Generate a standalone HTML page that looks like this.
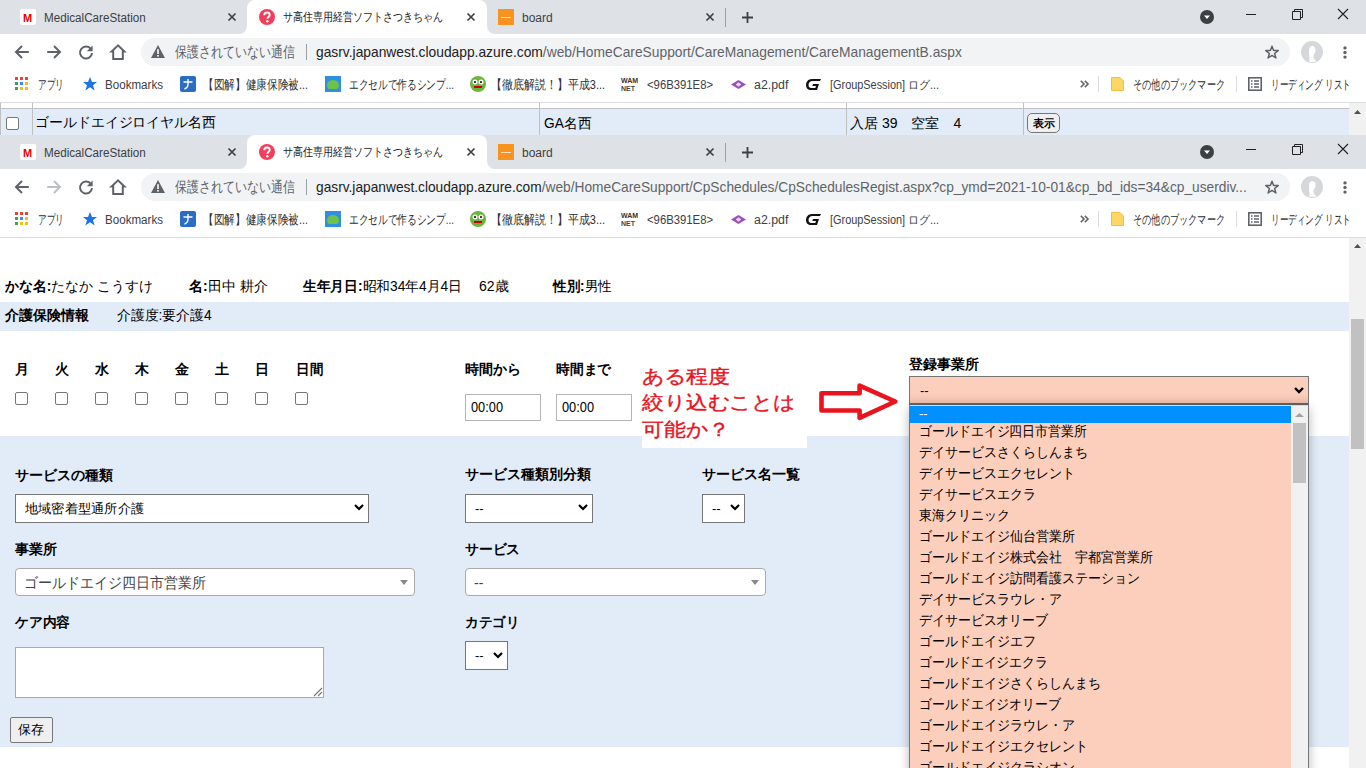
<!DOCTYPE html>
<html><head><meta charset="utf-8">
<style>
*{box-sizing:border-box;margin:0;padding:0}
html,body{width:1366px;height:768px;overflow:hidden;background:#fff;font-family:"Liberation Sans",sans-serif;color:#202124}
.a{position:absolute}
.win{position:absolute;left:0;width:1366px;height:237px}
.t{position:absolute;white-space:nowrap;line-height:1;transform-origin:0 50%}
svg{position:absolute;overflow:visible}
</style></head><body>

<div class="win" style="top:0px">
<div class="a" style="left:0px;top:0px;width:1366px;height:34px;background:#dee1e6;"></div>
<div class="a" style="left:247px;top:0px;width:240px;height:40px;background:#fff;border-radius:8px 8px 0 0"></div>
<div class="a" style="left:239px;top:26px;width:8px;height:8px;background:#fff;"></div>
<div class="a" style="left:231px;top:18px;width:16px;height:16px;background:#dee1e6;border-radius:0 0 8px 0"></div>
<div class="a" style="left:487px;top:26px;width:8px;height:8px;background:#fff;"></div>
<div class="a" style="left:487px;top:18px;width:16px;height:16px;background:#dee1e6;border-radius:0 0 0 8px"></div>
<div class="a" style="left:20px;top:9px;width:16px;height:16px;background:#fff;border-radius:2px"></div>
<div class="t f" style="left:23px;top:13px;font-size:11px;color:#f00000;font-weight:bold;--w:9;transform:scaleX(1.0000);">M</div>
<div class="t f" style="left:44px;top:12px;font-size:12px;color:#3c4043;--w:102;transform:scaleX(0.9714);">MedicalCareStation</div>
<svg style="left:228px;top:13px" width="8" height="8" viewBox="0 0 8 8"><path d="M0.5 0.5L7.5 7.5M7.5 0.5L0.5 7.5" stroke="#3c4043" stroke-width="1.7"/></svg>
<svg style="left:259px;top:9px" width="16" height="16" viewBox="0 0 16 16"><circle cx="8" cy="8" r="8" fill="#f23d5b"/><path d="M5.3 6.2C5.3 4.5 6.4 3.5 8 3.5C9.6 3.5 10.7 4.5 10.7 5.9C10.7 7.6 8.4 7.8 8.4 9.8" stroke="#fff" stroke-width="2" fill="none"/><circle cx="8.3" cy="12.3" r="1.2" fill="#fff"/></svg>
<div class="t f" style="left:283px;top:11px;font-size:12px;color:#202124;--w:160;transform:scaleX(0.8333);">サ高住専用経営ソフトさつきちゃん</div>
<svg style="left:467px;top:13px" width="8" height="8" viewBox="0 0 8 8"><path d="M0.5 0.5L7.5 7.5M7.5 0.5L0.5 7.5" stroke="#3c4043" stroke-width="1.7"/></svg>
<div class="a" style="left:498px;top:9px;width:16px;height:16px;background:#f7931e;"></div>
<div class="a" style="left:501px;top:17px;width:10px;height:1px;background:#fff;opacity:.7"></div>
<div class="t f" style="left:522px;top:12px;font-size:12px;color:#3c4043;--w:31;transform:scaleX(1.0000);">board</div>
<svg style="left:706px;top:13px" width="8" height="8" viewBox="0 0 8 8"><path d="M0.5 0.5L7.5 7.5M7.5 0.5L0.5 7.5" stroke="#3c4043" stroke-width="1.7"/></svg>
<div class="a" style="left:725px;top:8px;width:1px;height:19px;background:#9aa0a6;"></div>
<svg style="left:742px;top:12px" width="11" height="11" viewBox="0 0 11 11"><path d="M5.5 0V11M0 5.5H11" stroke="#3c4043" stroke-width="1.8"/></svg>
<svg style="left:1200px;top:10px" width="14" height="14" viewBox="0 0 14 14"><circle cx="7" cy="7" r="7" fill="#3c4043"/><path d="M4 5.5H10L7 9Z" fill="#fff"/></svg>
<div class="a" style="left:1246px;top:14px;width:10px;height:1px;background:#202124;"></div>
<svg style="left:1292px;top:9px" width="11" height="11" viewBox="0 0 11 11"><path d="M0.5 2.5H8.5V10.5H0.5Z M2.5 2.5V0.5H10.5V8.5H8.5" stroke="#202124" stroke-width="1" fill="none"/></svg>
<svg style="left:1338px;top:9px" width="10" height="10" viewBox="0 0 10 10"><path d="M0 0L10 10M10 0L0 10" stroke="#202124" stroke-width="1.1"/></svg>
<div class="a" style="left:0px;top:34px;width:1366px;height:36px;background:#fff;"></div>
<svg style="left:14px;top:45px" width="16" height="14" viewBox="0 0 16 14"><path d="M14.8 7H2.5M8 1L2 7L8 13" stroke="#5f6368" stroke-width="2" fill="none"/></svg>
<svg style="left:46px;top:45px" width="16" height="14" viewBox="0 0 16 14"><path d="M1.2 7H13.5M8 1L14 7L8 13" stroke="#5f6368" stroke-width="2" fill="none"/></svg>
<svg style="left:79px;top:45px" width="14" height="14" viewBox="0 0 14 14"><path d="M12 4.2A6 6 0 1 0 13 8" stroke="#5f6368" stroke-width="2" fill="none"/><path d="M13.6 0.4V6.2H7.8Z" fill="#5f6368"/></svg>
<svg style="left:110px;top:44px" width="16" height="15" viewBox="0 0 16 15"><path d="M8 1.4L1.6 7.6H3.2V15H12.8V7.6H14.4Z" stroke="#5f6368" stroke-width="2" fill="none"/></svg>
<div class="a" style="left:141px;top:38px;width:1149px;height:28px;background:#f1f3f4;border-radius:14px"></div>
<svg style="left:151px;top:45px" width="14" height="13" viewBox="0 0 14 13"><path d="M7 0L14 13H0Z" fill="#5f6368"/><rect x="6.2" y="4.2" width="1.6" height="4.8" fill="#fff"/><rect x="6.2" y="10" width="1.6" height="1.6" fill="#fff"/></svg>
<div class="t f" style="left:175px;top:44px;font-size:15px;color:#5f6368;--w:120;transform:scaleX(0.8000);">保護されていない通信</div>
<div class="a" style="left:306px;top:44px;width:1px;height:16px;background:#9aa0a6;"></div>
<div class="t f" style="left:316px;top:44px;font-size:15px;color:#202124;--w:646;transform:scaleX(0.9202);">gasrv.japanwest.cloudapp.azure.com<span style="color:#5f6368">/web/HomeCareSupport/CareManagement/CareManagementB.aspx</span></div>
<svg style="left:1265px;top:45px" width="14" height="14" viewBox="0 0 14 14"><path d="M7 1.2L8.6 5.4L13.2 5.6L9.6 8.5L10.9 13L7 10.4L3.1 13L4.4 8.5L0.8 5.6L5.4 5.4Z" stroke="#5f6368" stroke-width="1.5" fill="none" stroke-linejoin="round"/></svg>
<svg style="left:1301px;top:41px" width="22" height="22" viewBox="0 0 22 22"><circle cx="11" cy="11" r="11" fill="#d5d7da"/><path d="M8.5 21C8.5 15 7.5 10 8.5 7C10 4 14 4.5 14.5 8.5C15 12 12.5 13 12.5 15.5C12.5 17.5 14 19 15.5 20.5Z" fill="#fff"/></svg>
<svg style="left:1343px;top:46px" width="4" height="12" viewBox="0 0 4 12"><circle cx="2" cy="1.9" r="1.7" fill="#5f6368"/><circle cx="2" cy="6.5" r="1.7" fill="#5f6368"/><circle cx="2" cy="11.1" r="1.7" fill="#5f6368"/></svg>
<div class="a" style="left:0px;top:70px;width:1366px;height:32px;background:#fff;"></div>
<svg style="left:15px;top:77px" width="13" height="13" viewBox="0 0 13 13"><rect x="0" y="0" width="3" height="3" fill="#ea4335"/><rect x="5" y="0" width="3" height="3" fill="#ea4335"/><rect x="10" y="0" width="3" height="3" fill="#ea4335"/><rect x="0" y="5" width="3" height="3" fill="#34a853"/><rect x="5" y="5" width="3" height="3" fill="#4285f4"/><rect x="10" y="5" width="3" height="3" fill="#fbbc05"/><rect x="0" y="10" width="3" height="3" fill="#34a853"/><rect x="5" y="10" width="3" height="3" fill="#fbbc05"/><rect x="10" y="10" width="3" height="3" fill="#fbbc05"/></svg>
<div class="t f" style="left:38px;top:78px;font-size:13px;color:#2a2d30;--w:26;transform:scaleX(0.6667);">アプリ</div>
<svg style="left:83px;top:77px" width="14" height="14" viewBox="0 0 14 14"><path d="M7 0L9 5H14L10 8.3L11.6 13.5L7 10.3L2.4 13.5L4 8.3L0 5H5Z" fill="#1a73e8"/></svg>
<div class="t f" style="left:105px;top:79px;font-size:12px;color:#3c4043;--w:58;transform:scaleX(0.9667);">Bookmarks</div>
<div class="a" style="left:180px;top:76px;width:16px;height:16px;background:#2b6cc4;border-radius:2px"></div>
<svg style="left:182px;top:78px" width="12" height="12" viewBox="0 0 12 12"><path d="M1.5 4H10.5M6 1V6C6 8.5 5 10 2.5 11" stroke="#fff" stroke-width="1.4" fill="none"/></svg>
<div class="t f" style="left:203px;top:78px;font-size:13px;color:#2a2d30;--w:105;transform:scaleX(0.8203);">【図解】健康保険被...</div>
<div class="a" style="left:325px;top:76px;width:16px;height:16px;background:#2f8fe0;"></div>
<div class="a" style="left:327px;top:80px;width:12px;height:9px;background:#6cc24a;border-radius:6px 6px 4px 4px"></div>
<div class="t f" style="left:349px;top:78px;font-size:13px;color:#2a2d30;--w:105;transform:scaleX(0.7447);">エクセルで作るシンプ...</div>
<svg style="left:470px;top:76px" width="16" height="16" viewBox="0 0 16 16"><circle cx="8" cy="8" r="8" fill="#6db33f"/><circle cx="5" cy="6" r="2.5" fill="#fff"/><circle cx="11" cy="6" r="2.5" fill="#fff"/><circle cx="5" cy="6" r="1" fill="#000"/><circle cx="11" cy="6" r="1" fill="#000"/><path d="M4 11H12" stroke="#c00" stroke-width="2"/></svg>
<div class="t f" style="left:491px;top:78px;font-size:13px;color:#2a2d30;--w:114;transform:scaleX(0.8444);">【徹底解説！】平成3...</div>
<svg style="left:621px;top:77px" width="17" height="14" viewBox="0 0 17 14"><text x="0" y="6" font-size="7" font-weight="bold" fill="#333" font-family="Liberation Sans">WAM</text><text x="0" y="13.5" font-size="7" font-weight="bold" fill="#444" font-family="Liberation Sans">NET</text></svg>
<div class="t f" style="left:647px;top:79px;font-size:12px;color:#3c4043;--w:66;transform:scaleX(0.9429);">&lt;96B391E8&gt;</div>
<svg style="left:731px;top:80px" width="15" height="9" viewBox="0 0 15 9"><path d="M7.5 0L15 4.5L7.5 9L0 4.5Z" fill="#9b4fb8"/><path d="M7.5 2.3L10.3 4.5L7.5 6.7L4.7 4.5Z" fill="#e9d6f0"/></svg>
<div class="t f" style="left:754px;top:79px;font-size:12px;color:#3c4043;--w:34;transform:scaleX(1.0303);">a2.pdf</div>
<svg style="left:805px;top:77px" width="17" height="14" viewBox="0 0 17 14"><path d="M16 2H7C3 2 1 5 1 8C1 11 3 13 6 13H12L14 7H8L7.3 9H11L10.3 11H6.5C4.5 11 3.5 10 3.5 8C3.5 6 5 4 7.5 4H15Z" fill="#111"/></svg>
<div class="t f" style="left:830px;top:79px;font-size:12px;color:#3c4043;--w:109;transform:scaleX(0.9083);">[GroupSession] ログ...</div>
<svg style="left:1080px;top:80px" width="9" height="8" viewBox="0 0 9 8"><path d="M0.8 0.8L4 4L0.8 7.2M4.8 0.8L8 4L4.8 7.2" stroke="#5f6368" stroke-width="1.6" fill="none"/></svg>
<div class="a" style="left:1098px;top:76px;width:1px;height:16px;background:#dadce0;"></div>
<svg style="left:1111px;top:77px" width="13" height="14" viewBox="0 0 13 14"><path d="M0.5 0.5H9L12.5 4V13.5H0.5Z" fill="#fdd663" stroke="#f2bd42" stroke-width="1"/></svg>
<div class="t f" style="left:1133px;top:78px;font-size:13px;color:#2a2d30;--w:92;transform:scaleX(0.7077);">その他のブックマーク</div>
<div class="a" style="left:1236px;top:76px;width:1px;height:16px;background:#dadce0;"></div>
<svg style="left:1248px;top:77px" width="14" height="14" viewBox="0 0 14 14"><rect x="0.8" y="0.8" width="12.4" height="12.4" stroke="#5f6368" stroke-width="1.6" fill="none"/><path d="M3 4H4.5M6 4H11M3 7H4.5M6 7H11M3 10H4.5M6 10H11" stroke="#5f6368" stroke-width="1.4"/></svg>
<div class="t f" style="left:1271px;top:78px;font-size:13px;color:#2a2d30;--w:80;transform:scaleX(0.6612);">リーディング リスト</div>
<div class="a" style="left:0px;top:102px;width:1366px;height:1px;background:#dadce0;"></div>
</div>
<div class="a" style="left:0px;top:103px;width:1349px;height:32px;background:#fff;"></div>
<div class="a" style="left:0px;top:108px;width:1349px;height:1px;background:#c0c0c0;"></div>
<div class="a" style="left:1px;top:109px;width:1348px;height:26px;background:#e2ebf8;"></div>
<div class="a" style="left:0px;top:103px;width:1px;height:32px;background:#c0c0c0;"></div>
<div class="a" style="left:32px;top:103px;width:1px;height:32px;background:#c0c0c0;"></div>
<div class="a" style="left:539px;top:103px;width:1px;height:32px;background:#c0c0c0;"></div>
<div class="a" style="left:846px;top:103px;width:1px;height:32px;background:#c0c0c0;"></div>
<div class="a" style="left:1023px;top:103px;width:1px;height:32px;background:#c0c0c0;"></div>
<div class="a" style="left:6px;top:117px;width:13px;height:13px;background:#fff;border:1px solid #767676;border-radius:2px"></div>
<div class="t f" style="left:35px;top:115px;font-size:14px;color:#000;--w:181;transform:scaleX(0.9945);">ゴールドエイジロイヤル名西</div>
<div class="t f" style="left:544px;top:116px;font-size:14px;color:#000;--w:47;transform:scaleX(0.9792);">GA名西</div>
<div class="t f" style="left:850px;top:116px;font-size:14px;color:#000;--w:111;transform:scaleX(1.0000);font-family:"Liberation Mono",monospace;">入居 39　空室　4</div>
<div class="a" style="left:1027px;top:113px;width:33px;height:20px;background:#efefef;border:1px solid #767676;border-radius:5px"></div>
<div class="t f" style="left:1033px;top:118px;font-size:11px;color:#000;font-weight:bold;--w:22;transform:scaleX(1.0000);">表示</div>
<div class="a" style="left:1349px;top:103px;width:17px;height:32px;background:#f1f1f1;"></div>
<svg style="left:1354px;top:110px" width="7" height="4" viewBox="0 0 7 4"><path d="M3.5 0L7 4H0Z" fill="#505050"/></svg>
<div class="win" style="top:135px">
<div class="a" style="left:0px;top:0px;width:1366px;height:34px;background:#dee1e6;"></div>
<div class="a" style="left:247px;top:0px;width:240px;height:40px;background:#fff;border-radius:8px 8px 0 0"></div>
<div class="a" style="left:239px;top:26px;width:8px;height:8px;background:#fff;"></div>
<div class="a" style="left:231px;top:18px;width:16px;height:16px;background:#dee1e6;border-radius:0 0 8px 0"></div>
<div class="a" style="left:487px;top:26px;width:8px;height:8px;background:#fff;"></div>
<div class="a" style="left:487px;top:18px;width:16px;height:16px;background:#dee1e6;border-radius:0 0 0 8px"></div>
<div class="a" style="left:20px;top:9px;width:16px;height:16px;background:#fff;border-radius:2px"></div>
<div class="t f" style="left:23px;top:13px;font-size:11px;color:#f00000;font-weight:bold;--w:9;transform:scaleX(1.0000);">M</div>
<div class="t f" style="left:44px;top:12px;font-size:12px;color:#3c4043;--w:102;transform:scaleX(0.9714);">MedicalCareStation</div>
<svg style="left:228px;top:13px" width="8" height="8" viewBox="0 0 8 8"><path d="M0.5 0.5L7.5 7.5M7.5 0.5L0.5 7.5" stroke="#3c4043" stroke-width="1.7"/></svg>
<svg style="left:259px;top:9px" width="16" height="16" viewBox="0 0 16 16"><circle cx="8" cy="8" r="8" fill="#f23d5b"/><path d="M5.3 6.2C5.3 4.5 6.4 3.5 8 3.5C9.6 3.5 10.7 4.5 10.7 5.9C10.7 7.6 8.4 7.8 8.4 9.8" stroke="#fff" stroke-width="2" fill="none"/><circle cx="8.3" cy="12.3" r="1.2" fill="#fff"/></svg>
<div class="t f" style="left:283px;top:11px;font-size:12px;color:#202124;--w:160;transform:scaleX(0.8333);">サ高住専用経営ソフトさつきちゃん</div>
<svg style="left:467px;top:13px" width="8" height="8" viewBox="0 0 8 8"><path d="M0.5 0.5L7.5 7.5M7.5 0.5L0.5 7.5" stroke="#3c4043" stroke-width="1.7"/></svg>
<div class="a" style="left:498px;top:9px;width:16px;height:16px;background:#f7931e;"></div>
<div class="a" style="left:501px;top:17px;width:10px;height:1px;background:#fff;opacity:.7"></div>
<div class="t f" style="left:522px;top:12px;font-size:12px;color:#3c4043;--w:31;transform:scaleX(1.0000);">board</div>
<svg style="left:706px;top:13px" width="8" height="8" viewBox="0 0 8 8"><path d="M0.5 0.5L7.5 7.5M7.5 0.5L0.5 7.5" stroke="#3c4043" stroke-width="1.7"/></svg>
<div class="a" style="left:725px;top:8px;width:1px;height:19px;background:#9aa0a6;"></div>
<svg style="left:742px;top:12px" width="11" height="11" viewBox="0 0 11 11"><path d="M5.5 0V11M0 5.5H11" stroke="#3c4043" stroke-width="1.8"/></svg>
<svg style="left:1200px;top:10px" width="14" height="14" viewBox="0 0 14 14"><circle cx="7" cy="7" r="7" fill="#3c4043"/><path d="M4 5.5H10L7 9Z" fill="#fff"/></svg>
<div class="a" style="left:1246px;top:14px;width:10px;height:1px;background:#202124;"></div>
<svg style="left:1292px;top:9px" width="11" height="11" viewBox="0 0 11 11"><path d="M0.5 2.5H8.5V10.5H0.5Z M2.5 2.5V0.5H10.5V8.5H8.5" stroke="#202124" stroke-width="1" fill="none"/></svg>
<svg style="left:1338px;top:9px" width="10" height="10" viewBox="0 0 10 10"><path d="M0 0L10 10M10 0L0 10" stroke="#202124" stroke-width="1.1"/></svg>
<div class="a" style="left:0px;top:34px;width:1366px;height:36px;background:#fff;"></div>
<svg style="left:14px;top:45px" width="16" height="14" viewBox="0 0 16 14"><path d="M14.8 7H2.5M8 1L2 7L8 13" stroke="#5f6368" stroke-width="2" fill="none"/></svg>
<svg style="left:46px;top:45px" width="16" height="14" viewBox="0 0 16 14"><path d="M1.2 7H13.5M8 1L14 7L8 13" stroke="#bdc1c6" stroke-width="2" fill="none"/></svg>
<svg style="left:79px;top:45px" width="14" height="14" viewBox="0 0 14 14"><path d="M12 4.2A6 6 0 1 0 13 8" stroke="#5f6368" stroke-width="2" fill="none"/><path d="M13.6 0.4V6.2H7.8Z" fill="#5f6368"/></svg>
<svg style="left:110px;top:44px" width="16" height="15" viewBox="0 0 16 15"><path d="M8 1.4L1.6 7.6H3.2V15H12.8V7.6H14.4Z" stroke="#5f6368" stroke-width="2" fill="none"/></svg>
<div class="a" style="left:141px;top:38px;width:1149px;height:28px;background:#f1f3f4;border-radius:14px"></div>
<svg style="left:151px;top:45px" width="14" height="13" viewBox="0 0 14 13"><path d="M7 0L14 13H0Z" fill="#5f6368"/><rect x="6.2" y="4.2" width="1.6" height="4.8" fill="#fff"/><rect x="6.2" y="10" width="1.6" height="1.6" fill="#fff"/></svg>
<div class="t f" style="left:175px;top:44px;font-size:15px;color:#5f6368;--w:120;transform:scaleX(0.8000);">保護されていない通信</div>
<div class="a" style="left:306px;top:44px;width:1px;height:16px;background:#9aa0a6;"></div>
<div class="t f" style="left:316px;top:44px;font-size:15px;color:#202124;--w:931;transform:scaleX(0.9154);">gasrv.japanwest.cloudapp.azure.com<span style="color:#5f6368">/web/HomeCareSupport/CpSchedules/CpSchedulesRegist.aspx?cp_ymd=2021-10-01&amp;cp_bd_ids=34&amp;cp_userdiv...</span></div>
<svg style="left:1265px;top:45px" width="14" height="14" viewBox="0 0 14 14"><path d="M7 1.2L8.6 5.4L13.2 5.6L9.6 8.5L10.9 13L7 10.4L3.1 13L4.4 8.5L0.8 5.6L5.4 5.4Z" stroke="#5f6368" stroke-width="1.5" fill="none" stroke-linejoin="round"/></svg>
<svg style="left:1301px;top:41px" width="22" height="22" viewBox="0 0 22 22"><circle cx="11" cy="11" r="11" fill="#d5d7da"/><path d="M8.5 21C8.5 15 7.5 10 8.5 7C10 4 14 4.5 14.5 8.5C15 12 12.5 13 12.5 15.5C12.5 17.5 14 19 15.5 20.5Z" fill="#fff"/></svg>
<svg style="left:1343px;top:46px" width="4" height="12" viewBox="0 0 4 12"><circle cx="2" cy="1.9" r="1.7" fill="#5f6368"/><circle cx="2" cy="6.5" r="1.7" fill="#5f6368"/><circle cx="2" cy="11.1" r="1.7" fill="#5f6368"/></svg>
<div class="a" style="left:0px;top:70px;width:1366px;height:32px;background:#fff;"></div>
<svg style="left:15px;top:77px" width="13" height="13" viewBox="0 0 13 13"><rect x="0" y="0" width="3" height="3" fill="#ea4335"/><rect x="5" y="0" width="3" height="3" fill="#ea4335"/><rect x="10" y="0" width="3" height="3" fill="#ea4335"/><rect x="0" y="5" width="3" height="3" fill="#34a853"/><rect x="5" y="5" width="3" height="3" fill="#4285f4"/><rect x="10" y="5" width="3" height="3" fill="#fbbc05"/><rect x="0" y="10" width="3" height="3" fill="#34a853"/><rect x="5" y="10" width="3" height="3" fill="#fbbc05"/><rect x="10" y="10" width="3" height="3" fill="#fbbc05"/></svg>
<div class="t f" style="left:38px;top:78px;font-size:13px;color:#2a2d30;--w:26;transform:scaleX(0.6667);">アプリ</div>
<svg style="left:83px;top:77px" width="14" height="14" viewBox="0 0 14 14"><path d="M7 0L9 5H14L10 8.3L11.6 13.5L7 10.3L2.4 13.5L4 8.3L0 5H5Z" fill="#1a73e8"/></svg>
<div class="t f" style="left:105px;top:79px;font-size:12px;color:#3c4043;--w:58;transform:scaleX(0.9667);">Bookmarks</div>
<div class="a" style="left:180px;top:76px;width:16px;height:16px;background:#2b6cc4;border-radius:2px"></div>
<svg style="left:182px;top:78px" width="12" height="12" viewBox="0 0 12 12"><path d="M1.5 4H10.5M6 1V6C6 8.5 5 10 2.5 11" stroke="#fff" stroke-width="1.4" fill="none"/></svg>
<div class="t f" style="left:203px;top:78px;font-size:13px;color:#2a2d30;--w:105;transform:scaleX(0.8203);">【図解】健康保険被...</div>
<div class="a" style="left:325px;top:76px;width:16px;height:16px;background:#2f8fe0;"></div>
<div class="a" style="left:327px;top:80px;width:12px;height:9px;background:#6cc24a;border-radius:6px 6px 4px 4px"></div>
<div class="t f" style="left:349px;top:78px;font-size:13px;color:#2a2d30;--w:105;transform:scaleX(0.7447);">エクセルで作るシンプ...</div>
<svg style="left:470px;top:76px" width="16" height="16" viewBox="0 0 16 16"><circle cx="8" cy="8" r="8" fill="#6db33f"/><circle cx="5" cy="6" r="2.5" fill="#fff"/><circle cx="11" cy="6" r="2.5" fill="#fff"/><circle cx="5" cy="6" r="1" fill="#000"/><circle cx="11" cy="6" r="1" fill="#000"/><path d="M4 11H12" stroke="#c00" stroke-width="2"/></svg>
<div class="t f" style="left:491px;top:78px;font-size:13px;color:#2a2d30;--w:114;transform:scaleX(0.8444);">【徹底解説！】平成3...</div>
<svg style="left:621px;top:77px" width="17" height="14" viewBox="0 0 17 14"><text x="0" y="6" font-size="7" font-weight="bold" fill="#333" font-family="Liberation Sans">WAM</text><text x="0" y="13.5" font-size="7" font-weight="bold" fill="#444" font-family="Liberation Sans">NET</text></svg>
<div class="t f" style="left:647px;top:79px;font-size:12px;color:#3c4043;--w:66;transform:scaleX(0.9429);">&lt;96B391E8&gt;</div>
<svg style="left:731px;top:80px" width="15" height="9" viewBox="0 0 15 9"><path d="M7.5 0L15 4.5L7.5 9L0 4.5Z" fill="#9b4fb8"/><path d="M7.5 2.3L10.3 4.5L7.5 6.7L4.7 4.5Z" fill="#e9d6f0"/></svg>
<div class="t f" style="left:754px;top:79px;font-size:12px;color:#3c4043;--w:34;transform:scaleX(1.0303);">a2.pdf</div>
<svg style="left:805px;top:77px" width="17" height="14" viewBox="0 0 17 14"><path d="M16 2H7C3 2 1 5 1 8C1 11 3 13 6 13H12L14 7H8L7.3 9H11L10.3 11H6.5C4.5 11 3.5 10 3.5 8C3.5 6 5 4 7.5 4H15Z" fill="#111"/></svg>
<div class="t f" style="left:830px;top:79px;font-size:12px;color:#3c4043;--w:109;transform:scaleX(0.9083);">[GroupSession] ログ...</div>
<svg style="left:1080px;top:80px" width="9" height="8" viewBox="0 0 9 8"><path d="M0.8 0.8L4 4L0.8 7.2M4.8 0.8L8 4L4.8 7.2" stroke="#5f6368" stroke-width="1.6" fill="none"/></svg>
<div class="a" style="left:1098px;top:76px;width:1px;height:16px;background:#dadce0;"></div>
<svg style="left:1111px;top:77px" width="13" height="14" viewBox="0 0 13 14"><path d="M0.5 0.5H9L12.5 4V13.5H0.5Z" fill="#fdd663" stroke="#f2bd42" stroke-width="1"/></svg>
<div class="t f" style="left:1133px;top:78px;font-size:13px;color:#2a2d30;--w:92;transform:scaleX(0.7077);">その他のブックマーク</div>
<div class="a" style="left:1236px;top:76px;width:1px;height:16px;background:#dadce0;"></div>
<svg style="left:1248px;top:77px" width="14" height="14" viewBox="0 0 14 14"><rect x="0.8" y="0.8" width="12.4" height="12.4" stroke="#5f6368" stroke-width="1.6" fill="none"/><path d="M3 4H4.5M6 4H11M3 7H4.5M6 7H11M3 10H4.5M6 10H11" stroke="#5f6368" stroke-width="1.4"/></svg>
<div class="t f" style="left:1271px;top:78px;font-size:13px;color:#2a2d30;--w:80;transform:scaleX(0.6612);">リーディング リスト</div>
<div class="a" style="left:0px;top:102px;width:1366px;height:1px;background:#dadce0;"></div>
</div>
<div class="a" style="left:0px;top:238px;width:1349px;height:530px;background:#fff;"></div>
<div class="t f" style="left:5px;top:279px;font-size:14px;color:#000;--w:148;transform:scaleX(0.9933);"><b>かな名:</b>たなか こうすけ</div>
<div class="t f" style="left:189px;top:279px;font-size:14px;color:#000;--w:79;transform:scaleX(1.0000);"><b>名:</b>田中 耕介</div>
<div class="t f" style="left:303px;top:279px;font-size:14px;color:#000;--w:159;transform:scaleX(0.9815);"><b>生年月日:</b>昭和34年4月4日</div>
<div class="t f" style="left:479px;top:279px;font-size:14px;color:#000;--w:30;transform:scaleX(1.0000);">62歳</div>
<div class="t f" style="left:553px;top:279px;font-size:14px;color:#000;--w:59;transform:scaleX(0.9672);"><b>性別:</b>男性</div>
<div class="a" style="left:0px;top:302px;width:1349px;height:29px;background:#e2ebf8;"></div>
<div class="t f" style="left:5px;top:308px;font-size:14px;color:#000;font-weight:bold;--w:84;transform:scaleX(1.0000);">介護保険情報</div>
<div class="t f" style="left:117px;top:308px;font-size:14px;color:#000;--w:95;transform:scaleX(0.9896);">介護度:要介護4</div>
<div class="t" style="left:15px;top:362px;font-size:14px;color:#000;font-weight:bold;">月</div>
<div class="a" style="left:15px;top:392px;width:13px;height:13px;background:#fff;border:1px solid #767676;border-radius:2px"></div>
<div class="t" style="left:55px;top:362px;font-size:14px;color:#000;font-weight:bold;">火</div>
<div class="a" style="left:55px;top:392px;width:13px;height:13px;background:#fff;border:1px solid #767676;border-radius:2px"></div>
<div class="t" style="left:95px;top:362px;font-size:14px;color:#000;font-weight:bold;">水</div>
<div class="a" style="left:95px;top:392px;width:13px;height:13px;background:#fff;border:1px solid #767676;border-radius:2px"></div>
<div class="t" style="left:135px;top:362px;font-size:14px;color:#000;font-weight:bold;">木</div>
<div class="a" style="left:135px;top:392px;width:13px;height:13px;background:#fff;border:1px solid #767676;border-radius:2px"></div>
<div class="t" style="left:175px;top:362px;font-size:14px;color:#000;font-weight:bold;">金</div>
<div class="a" style="left:175px;top:392px;width:13px;height:13px;background:#fff;border:1px solid #767676;border-radius:2px"></div>
<div class="t" style="left:215px;top:362px;font-size:14px;color:#000;font-weight:bold;">土</div>
<div class="a" style="left:215px;top:392px;width:13px;height:13px;background:#fff;border:1px solid #767676;border-radius:2px"></div>
<div class="t" style="left:255px;top:362px;font-size:14px;color:#000;font-weight:bold;">日</div>
<div class="a" style="left:255px;top:392px;width:13px;height:13px;background:#fff;border:1px solid #767676;border-radius:2px"></div>
<div class="t f" style="left:296px;top:362px;font-size:14px;color:#000;font-weight:bold;--w:27;transform:scaleX(0.9643);">日間</div>
<div class="a" style="left:295px;top:392px;width:13px;height:13px;background:#fff;border:1px solid #767676;border-radius:2px"></div>
<div class="t f" style="left:465px;top:362px;font-size:14px;color:#000;font-weight:bold;--w:56;transform:scaleX(1.0000);">時間から</div>
<div class="t f" style="left:556px;top:362px;font-size:14px;color:#000;font-weight:bold;--w:55;transform:scaleX(0.9821);">時間まで</div>
<div class="a" style="left:465px;top:394px;width:76px;height:27px;background:#fff;border:1px solid #b5b5b5"></div>
<div class="a" style="left:556px;top:394px;width:76px;height:27px;background:#fff;border:1px solid #b5b5b5"></div>
<div class="t f" style="left:471px;top:400px;font-size:14px;color:#000;--w:32;transform:scaleX(0.9143);">00:00</div>
<div class="t f" style="left:562px;top:400px;font-size:14px;color:#000;--w:32;transform:scaleX(0.9143);">00:00</div>
<div class="a" style="left:0px;top:436px;width:1349px;height:311px;background:#e2ebf8;"></div>
<div class="a" style="left:642px;top:358px;width:165px;height:90px;background:#fff;"></div>
<div class="t f" style="left:642px;top:367px;font-size:19px;color:#e8141e;--w:88;transform:scaleX(1.1579);-webkit-text-stroke:0.35px #e8141e;">ある程度</div>
<div class="t f" style="left:642px;top:393px;font-size:19px;color:#e8141e;--w:153;transform:scaleX(1.1504);-webkit-text-stroke:0.35px #e8141e;">絞り込むことは</div>
<div class="t f" style="left:642px;top:420px;font-size:19px;color:#e8141e;--w:88;transform:scaleX(1.1579);-webkit-text-stroke:0.35px #e8141e;">可能か？</div>
<svg style="left:819px;top:383px" width="80" height="38" viewBox="0 0 80 38"><path d="M2.5 10.3H40.6V2.6L76.3 18.5L40.6 34.8V27.5H2.5Z" fill="#fff" stroke="#e8141e" stroke-width="4.6" stroke-linejoin="round"/></svg>
<div class="t f" style="left:15px;top:468px;font-size:14px;color:#000;font-weight:bold;--w:98;transform:scaleX(1.0000);">サービスの種類</div>
<div class="a" style="left:15px;top:494px;width:354px;height:29px;background:#fff;border:1px solid #767676;border-radius:0"></div>
<div class="t f" style="left:25px;top:502px;font-size:13px;color:#000;--w:119;transform:scaleX(1.0171);">地域密着型通所介護</div>
<svg style="left:354px;top:504px" width="10" height="6" viewBox="0 0 10 6"><path d="M1 1L5 5L9 1" stroke="#000" stroke-width="2.2" fill="none"/></svg>
<div class="t f" style="left:465px;top:467px;font-size:14px;color:#000;font-weight:bold;--w:126;transform:scaleX(1.0000);">サービス種類別分類</div>
<div class="a" style="left:465px;top:494px;width:128px;height:29px;background:#fff;border:1px solid #767676"></div>
<div class="t" style="left:475px;top:502px;font-size:13px;color:#000;">--</div>
<svg style="left:578px;top:504px" width="10" height="6" viewBox="0 0 10 6"><path d="M1 1L5 5L9 1" stroke="#000" stroke-width="2.2" fill="none"/></svg>
<div class="t f" style="left:702px;top:467px;font-size:14px;color:#000;font-weight:bold;--w:98;transform:scaleX(1.0000);">サービス名一覧</div>
<div class="a" style="left:702px;top:494px;width:43px;height:29px;background:#fff;border:1px solid #767676"></div>
<div class="t" style="left:712px;top:502px;font-size:13px;color:#000;">--</div>
<svg style="left:730px;top:504px" width="10" height="6" viewBox="0 0 10 6"><path d="M1 1L5 5L9 1" stroke="#000" stroke-width="2.2" fill="none"/></svg>
<div class="t f" style="left:15px;top:542px;font-size:14px;color:#000;font-weight:bold;--w:42;transform:scaleX(1.0000);">事業所</div>
<div class="a" style="left:15px;top:568px;width:400px;height:28px;background:#fff;border:1px solid #aaa;border-radius:4px"></div>
<div class="t f" style="left:24px;top:575px;font-size:15px;color:#444;--w:182;transform:scaleX(0.9333);">ゴールドエイジ四日市営業所</div>
<svg style="left:400px;top:580px" width="8" height="5" viewBox="0 0 8 5"><path d="M0 0H8L4 5Z" fill="#888"/></svg>
<div class="t f" style="left:465px;top:542px;font-size:14px;color:#000;font-weight:bold;--w:55;transform:scaleX(0.9821);">サービス</div>
<div class="a" style="left:465px;top:568px;width:301px;height:28px;background:#fff;border:1px solid #aaa;border-radius:4px"></div>
<div class="t" style="left:474px;top:576px;font-size:14px;color:#444;">--</div>
<svg style="left:751px;top:580px" width="8" height="5" viewBox="0 0 8 5"><path d="M0 0H8L4 5Z" fill="#888"/></svg>
<div class="t f" style="left:15px;top:615px;font-size:14px;color:#000;font-weight:bold;--w:55;transform:scaleX(0.9821);">ケア内容</div>
<div class="a" style="left:465px;top:615px;width:0px;height:0px;background:#000;"></div>
<div class="t f" style="left:465px;top:615px;font-size:14px;color:#000;font-weight:bold;--w:54;transform:scaleX(0.9643);">カテゴリ</div>
<div class="a" style="left:465px;top:641px;width:43px;height:29px;background:#fff;border:1px solid #767676"></div>
<div class="t" style="left:475px;top:649px;font-size:13px;color:#000;">--</div>
<svg style="left:493px;top:652px" width="10" height="6" viewBox="0 0 10 6"><path d="M1 1L5 5L9 1" stroke="#000" stroke-width="2.2" fill="none"/></svg>
<div class="a" style="left:15px;top:647px;width:309px;height:51px;background:#fff;border:1px solid #a9a9a9"></div>
<svg style="left:313px;top:687px" width="10" height="10" viewBox="0 0 10 10"><path d="M9 1L1 9M9 5L5 9" stroke="#777" stroke-width="1.1"/></svg>
<div class="a" style="left:10px;top:717px;width:43px;height:26px;background:#efefef;border:1px solid #767676;border-radius:2px"></div>
<div class="t f" style="left:18px;top:723px;font-size:13px;color:#000;--w:26;transform:scaleX(1.0000);">保存</div>
<div class="t f" style="left:909px;top:357px;font-size:14px;color:#000;font-weight:bold;--w:70;transform:scaleX(1.0000);">登録事業所</div>
<div class="a" style="left:909px;top:376px;width:400px;height:29px;background:linear-gradient(#fccebc 0%,#fccebc 62%,#eec0ad 100%);border:1px solid #767676;border-bottom:2px solid #666"></div>
<div class="t" style="left:920px;top:384px;font-size:13px;color:#000;">--</div>
<svg style="left:1294px;top:387px" width="10" height="6" viewBox="0 0 10 6"><path d="M1 1L5 5L9 1" stroke="#000" stroke-width="2.4" fill="none"/></svg>
<div class="a" style="left:909px;top:405px;width:400px;height:380px;background:#fccebc;border-left:1px solid #767676;border-right:1px solid #767676;box-shadow:0 3px 10px rgba(0,0,0,.28)"></div>
<div class="a" style="left:910px;top:406px;width:381px;height:17px;background:#0090ff;"></div>
<div class="t" style="left:919px;top:407px;font-size:13px;color:#fff;">--</div>
<div class="a" style="left:1291px;top:406px;width:17px;height:370px;background:#f1f1f1;"></div>
<svg style="left:1295px;top:413px" width="9" height="4" viewBox="0 0 9 4"><path d="M4.5 0L9 4H0Z" fill="#a3a3a3"/></svg>
<div class="a" style="left:1293px;top:423px;width:13px;height:60px;background:#c1c1c1;"></div>
<div class="t f" style="left:919px;top:424px;font-size:14px;color:#000;--w:168;transform:scaleX(0.9231);">ゴールドエイジ四日市営業所</div>
<div class="t f" style="left:919px;top:445px;font-size:14px;color:#000;--w:169;transform:scaleX(0.9286);">デイサービスさくらしんまち</div>
<div class="t f" style="left:919px;top:466px;font-size:14px;color:#000;--w:156;transform:scaleX(0.9286);">デイサービスエクセレント</div>
<div class="t f" style="left:919px;top:487px;font-size:14px;color:#000;--w:117;transform:scaleX(0.9286);">デイサービスエクラ</div>
<div class="t f" style="left:919px;top:508px;font-size:14px;color:#000;--w:91;transform:scaleX(0.9286);">東海クリニック</div>
<div class="t f" style="left:919px;top:529px;font-size:14px;color:#000;--w:156;transform:scaleX(0.9286);">ゴールドエイジ仙台営業所</div>
<div class="t f" style="left:919px;top:550px;font-size:14px;color:#000;--w:234;transform:scaleX(0.9286);">ゴールドエイジ株式会社　宇都宮営業所</div>
<div class="t f" style="left:919px;top:571px;font-size:14px;color:#000;--w:221;transform:scaleX(0.9286);">ゴールドエイジ訪問看護ステーション</div>
<div class="t f" style="left:919px;top:592px;font-size:14px;color:#000;--w:143;transform:scaleX(0.9286);">デイサービスラウレ・ア</div>
<div class="t f" style="left:919px;top:613px;font-size:14px;color:#000;--w:129;transform:scaleX(0.9214);">デイサービスオリーブ</div>
<div class="t f" style="left:919px;top:634px;font-size:14px;color:#000;--w:117;transform:scaleX(0.9286);">ゴールドエイジエフ</div>
<div class="t f" style="left:919px;top:655px;font-size:14px;color:#000;--w:129;transform:scaleX(0.9214);">ゴールドエイジエクラ</div>
<div class="t f" style="left:919px;top:676px;font-size:14px;color:#000;--w:182;transform:scaleX(0.9286);">ゴールドエイジさくらしんまち</div>
<div class="t f" style="left:919px;top:697px;font-size:14px;color:#000;--w:142;transform:scaleX(0.9221);">ゴールドエイジオリーブ</div>
<div class="t f" style="left:919px;top:718px;font-size:14px;color:#000;--w:156;transform:scaleX(0.9286);">ゴールドエイジラウレ・ア</div>
<div class="t f" style="left:919px;top:739px;font-size:14px;color:#000;--w:169;transform:scaleX(0.9286);">ゴールドエイジエクセレント</div>
<div class="t f" style="left:919px;top:760px;font-size:14px;color:#000;--w:156;transform:scaleX(0.9286);">ゴールドエイジクラシオン</div>
<div class="a" style="left:1349px;top:238px;width:17px;height:530px;background:#f1f1f1;"></div>
<svg style="left:1354px;top:244px" width="7" height="4" viewBox="0 0 7 4"><path d="M3.5 0L7 4H0Z" fill="#505050"/></svg>
<div class="a" style="left:1351px;top:319px;width:13px;height:130px;background:#c1c1c1;"></div>

<script>
(function(){
 var els=document.querySelectorAll('.f');
 for(var i=0;i<els.length;i++){var e=els[i];var w=parseFloat(getComputedStyle(e).getPropertyValue('--w'));var m=e.offsetWidth; if(m>0&&w>0){e.style.transform='scaleX('+(w/m)+')';}}
})();
</script>
</body></html>
